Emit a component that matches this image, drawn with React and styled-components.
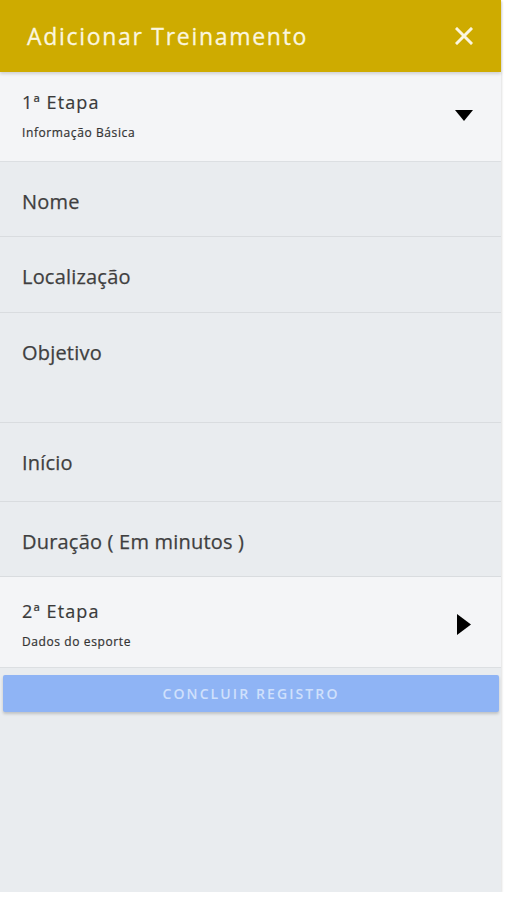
import React from 'react';
import styled, { createGlobalStyle } from 'styled-components';

const Global = createGlobalStyle`
  body {
    margin: 0;
    background: #ffffff;
    font-family: "Open Sans", "Noto Sans", sans-serif;
  }
`

const Screen = styled.div`
  width: 501px;
  height: 892px;
  background: #e9ecef;
  display: flex;
  flex-direction: column;
  box-shadow: 1px 1px 2px rgba(0, 0, 0, 0.12);
`

const Header = styled.header`
  height: 72px;
  background: #ceab00;
  display: flex;
  align-items: center;
  justify-content: space-between;
  padding: 0 28px 0 27px;
  box-sizing: border-box;
  box-shadow: 0 2px 3px rgba(0, 0, 0, 0.15);
  position: relative;
  z-index: 1;
`

const Title = styled.h1`
  margin: 0;
  font-size: 23px;
  font-weight: 400;
  letter-spacing: 1.7px;
  color: #fbf6df;
  -webkit-text-stroke: 0.3px #fbf6df;
`

const Close = styled.button`
  border: 0;
  background: none;
  padding: 0;
  width: 18px;
  height: 18px;
  display: flex;
  cursor: pointer;
`

const Step = styled.div`
  height: ${p => p.h}px;
  background: #f4f5f7;
  border-bottom: 1px solid #dcdfe2;
  box-sizing: border-box;
  display: flex;
  align-items: center;
  justify-content: space-between;
  padding: ${p => p.shift > 0 ? p.shift : 0}px ${p => p.right}px ${p => p.shift < 0 ? -p.shift : 0}px 22px;
`

const StepText = styled.div`
  display: flex;
  flex-direction: column;
  gap: 11px;
`

const StepTitle = styled.span`
  font-size: 18px;
  letter-spacing: 1.1px;
  color: #3a3a3a;
  line-height: 24px;
  -webkit-text-stroke: 0.2px #3a3a3a;
`

const StepSub = styled.span`
  font-size: 12px;
  letter-spacing: 0.6px;
  color: #333333;
  line-height: 16px;
  -webkit-text-stroke: 0.2px #333333;
`

const Field = styled.div`
  height: ${p => p.h}px;
  border-bottom: 1px solid #d9dcdf;
  box-sizing: border-box;
  padding: 26px 22px 0;
`

const Label = styled.label`
  display: block;
  font-size: 20px;
  line-height: 28px;
  letter-spacing: 0.2px;
  color: #3f3f3f;
  -webkit-text-stroke: 0.25px #3f3f3f;
`

const Submit = styled.button`
  margin: 7px 2px 0 3px;
  height: 37px;
  border: 0;
  border-radius: 2px;
  background: #8fb4f5;
  color: #cfe0fc;
  font-family: "Open Sans", sans-serif;
  font-size: 14px;
  font-weight: 600;
  letter-spacing: 2.1px;
  text-transform: uppercase;
  box-shadow: 0 2px 3px rgba(0, 0, 0, 0.18);
`

const fields = [
  { label: 'Nome', h: 75 },
  { label: 'Localização', h: 76 },
  { label: 'Objetivo', h: 110 },
  { label: 'Início', h: 79 },
  { label: 'Duração ( Em minutos )', h: 75 },
]

export default function App() {
  return (
    <>
      <Global />
      <Screen>
        <Header>
          <Title>Adicionar Treinamento</Title>
          <Close aria-label="Fechar">
            <svg width="18" height="18" viewBox="0 0 18 18">
              <path d="M2 2 L16 16 M16 2 L2 16" stroke="#fbf6df" strokeWidth="3" strokeLinecap="square" />
            </svg>
          </Close>
        </Header>
        <Step h={90} shift={-3} right={28}>
          <StepText>
            <StepTitle>1ª Etapa</StepTitle>
            <StepSub>Informação Básica</StepSub>
          </StepText>
          <svg width="18" height="11" viewBox="0 0 18 11">
            <path d="M0 0 H18 L9 11 Z" fill="#000" />
          </svg>
        </Step>
        {fields.map(f => (
          <Field key={f.label} h={f.h}>
            <Label>{f.label}</Label>
          </Field>
        ))}
        <Step h={91} shift={4} right={30}>
          <StepText>
            <StepTitle>2ª Etapa</StepTitle>
            <StepSub>Dados do esporte</StepSub>
          </StepText>
          <svg width="14" height="21" viewBox="0 0 14 21">
            <path d="M0 0 L14 10.5 L0 21 Z" fill="#000" />
          </svg>
        </Step>
        <Submit>Concluir registro</Submit>
      </Screen>
    </>
  )
}
